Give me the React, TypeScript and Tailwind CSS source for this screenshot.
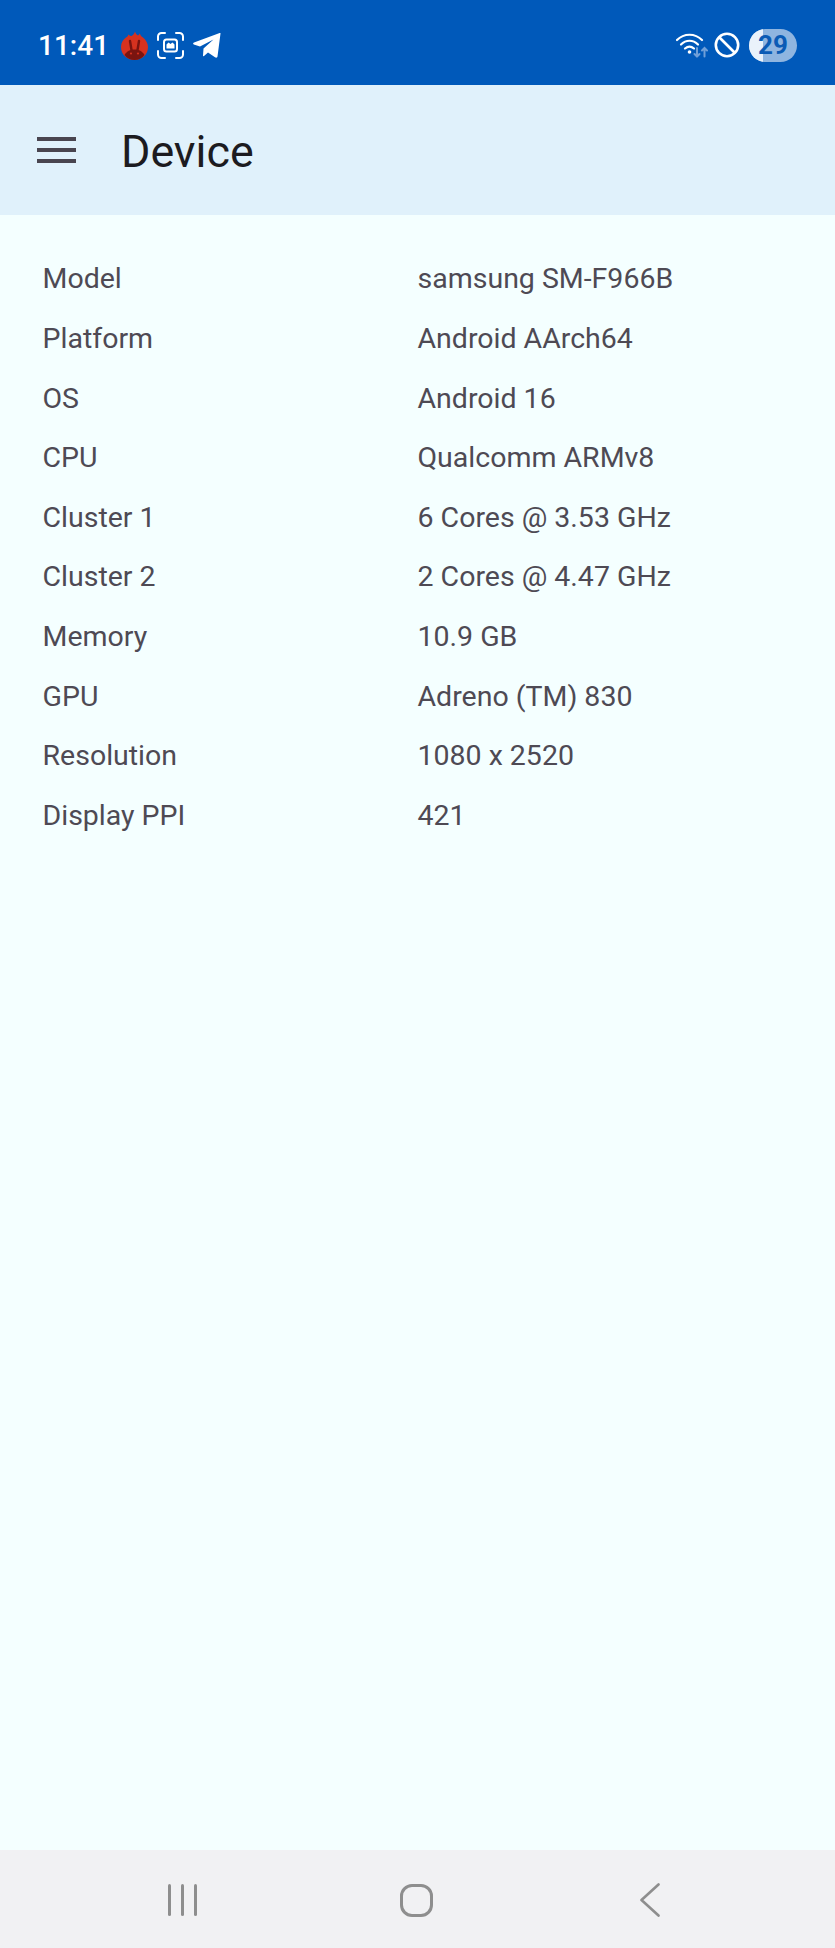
import React from 'react';

const rows = [
  ['Model', 'samsung SM-F966B'],
  ['Platform', 'Android AArch64'],
  ['OS', 'Android 16'],
  ['CPU', 'Qualcomm ARMv8'],
  ['Cluster 1', '6 Cores @ 3.53 GHz'],
  ['Cluster 2', '2 Cores @ 4.47 GHz'],
  ['Memory', '10.9 GB'],
  ['GPU', 'Adreno (TM) 830'],
  ['Resolution', '1080 x 2520'],
  ['Display PPI', '421']
];

const AntutuIcon = () => (
  <svg width="27" height="29" viewBox="0 0 27 29">
    <path d="M14 0.5 C14.5 2.5 15.5 3.5 17 4.5 C18 3.8 18.5 3.2 18.8 2.5 C19.5 4.5 20.5 5.5 22 6.5 C25 9 27 12.5 27 16 C27 23.5 21 29 13.5 29 C6 29 0 23.5 0 16 C0 12 2 8.5 5 6.5 C6 6 7 5 7.5 3.5 C8.5 4.5 9.5 5 10.5 5 C12 4 13.5 2.5 14 0.5 Z" fill="#d6321f" />
    <path d="M3.5 24 C6 20 9 18.5 13.5 18.5 C18 18.5 21 20 23.5 24 C21 27.3 17.5 29 13.5 29 C9.5 29 6 27.3 3.5 24 Z" fill="#7a1410" />
    <path d="M9 10 L10.5 19 M18 10 L16.5 19" stroke="#7a1410" strokeWidth="2.4" strokeLinecap="round" />
    <circle cx="10" cy="22.5" r="1.1" fill="#d6321f" />
    <circle cx="17" cy="22.5" r="1.1" fill="#d6321f" />
  </svg>
);

const ScreenshotIcon = () => (
  <svg width="27" height="27" viewBox="0 0 27 27" fill="none" stroke="#fff" strokeWidth="2" strokeLinecap="round">
    <path d="M1 8 V4.5 A3.5 3.5 0 0 1 4.5 1 H8" />
    <path d="M19 1 H22.5 A3.5 3.5 0 0 1 26 4.5 V8" />
    <path d="M26 19 V22.5 A3.5 3.5 0 0 1 22.5 26 H19" />
    <path d="M8 26 H4.5 A3.5 3.5 0 0 1 1 22.5 V19" />
    <rect x="7" y="7.5" width="13" height="12" rx="2.5" />
    <path d="M9.5 16.5 V12.5 L11.5 10.5 L13.5 12 L15.5 10.5 L17.5 12.5 V16.5 Z" fill="#fff" stroke="none" />
  </svg>
);

const TelegramIcon = () => (
  <svg width="28" height="25" viewBox="0 0 28 25">
    <path d="M27.5 0.5 L24.5 23.5 C24.2 24.8 23 25 22 24.3 L15 19.5 L11 23 C10.5 23.5 10 23.2 10 22.5 L10.5 15.5 L20.5 6.5 L7 13.5 L0.8 11.5 C-0.2 11 -0.1 10 1 9.5 L26 0.2 C27 -0.1 27.7 0 27.5 0.5 Z" fill="#fff" />
  </svg>
);

const WifiIcon = () => (
  <svg width="32" height="25" viewBox="0 0 32 25" fill="none" strokeLinecap="round">
    <path d="M1 7 C8 0 19 0 26 7" stroke="#fff" strokeWidth="2.2" />
    <path d="M5 11.5 C10 6.5 17 6.5 22 11.5" stroke="#fff" strokeWidth="2.2" />
    <path d="M9 15.5 C12 13 15 13 18 15.5" stroke="#fff" strokeWidth="2.2" />
    <circle cx="13.5" cy="19" r="1.8" fill="#fff" />
    <path d="M21 15 V23.5 M18.5 21 L21 23.5 L23.5 21" stroke="#6f9fd8" strokeWidth="2" />
    <path d="M28.5 23.5 V15 M26 17.5 L28.5 15 L31 17.5" stroke="#6f9fd8" strokeWidth="2" />
  </svg>
);

const BlockIcon = () => (
  <svg width="26" height="26" viewBox="0 0 26 26" fill="none" stroke="#fff" strokeWidth="2.6">
    <circle cx="13" cy="13" r="11.2" />
    <path d="M5 5 L21 21" />
  </svg>
);

const BatteryBadge = () => (
  <div className="relative flex h-[33px] w-[48px] items-center justify-center overflow-hidden rounded-full bg-[#8fb5e0]">
    <div className="absolute inset-y-0 left-0 w-[14px] bg-[#eaf2fb]" />
    <span className="relative text-[26px] font-bold leading-none text-[#0b5bb5]">29</span>
  </div>
);

const App = () => (
  <div className="flex h-[1948px] w-[835px] flex-col bg-[#f4ffff] font-['Roboto',sans-serif]">
    <div className="flex h-[85px] shrink-0 items-center justify-between bg-[#0059ba] pl-[38px] pr-[38px] pt-[5px]">
      <div className="flex items-center">
        <span className="pt-[1px] text-[28px] font-medium leading-none text-white">11:41</span>
        <div className="ml-[12px] flex items-center gap-[9px]">
          <AntutuIcon />
          <ScreenshotIcon />
          <TelegramIcon />
        </div>
      </div>
      <div className="flex items-center">
        <WifiIcon />
        <div className="ml-[6px] mr-[9px]">
          <BlockIcon />
        </div>
        <BatteryBadge />
      </div>
    </div>

    <div className="flex h-[130px] shrink-0 items-center bg-[#e0f1fb] pl-[37px]">
      <div className="flex w-[84px] flex-col gap-[7px]">
        <div className="h-[4px] w-[39px] bg-[#49454f]" />
        <div className="h-[4px] w-[39px] bg-[#49454f]" />
        <div className="h-[4px] w-[39px] bg-[#49454f]" />
      </div>
      <h1 className="pt-[5px] text-[44.8px] font-normal leading-none text-[#1c1b1f]">Device</h1>
    </div>

    <div className="flex-1 pl-[42.5px] pt-[35px]">
      {rows.map(([label, value]) => (
        <div key={label} className="flex h-[59.6px] items-center text-[28.5px] text-[#4e4a54]">
          <div className="w-[375px]">{label}</div>
          <div>{value}</div>
        </div>
      ))}
    </div>

    <div className="flex h-[98px] shrink-0 items-center bg-[#f1f1f3] pt-[2px]">
      <div className="ml-[168px] flex gap-[10px]">
        <div className="h-[32px] w-[3px] rounded-full bg-[#8e8e8e]" />
        <div className="h-[32px] w-[3px] rounded-full bg-[#8e8e8e]" />
        <div className="h-[32px] w-[3px] rounded-full bg-[#8e8e8e]" />
      </div>
      <div className="ml-[203px] h-[33px] w-[33px] rounded-[12px] border-[3px] border-[#8e8e8e]" />
      <svg className="ml-[207px]" width="20" height="34" viewBox="0 0 20 34" fill="none" stroke="#8e8e8e" strokeWidth="2.6" strokeLinecap="round" strokeLinejoin="round">
        <path d="M18.5 1.5 L1.5 17 L18.5 32.5" />
      </svg>
    </div>
  </div>
);

export default App;
